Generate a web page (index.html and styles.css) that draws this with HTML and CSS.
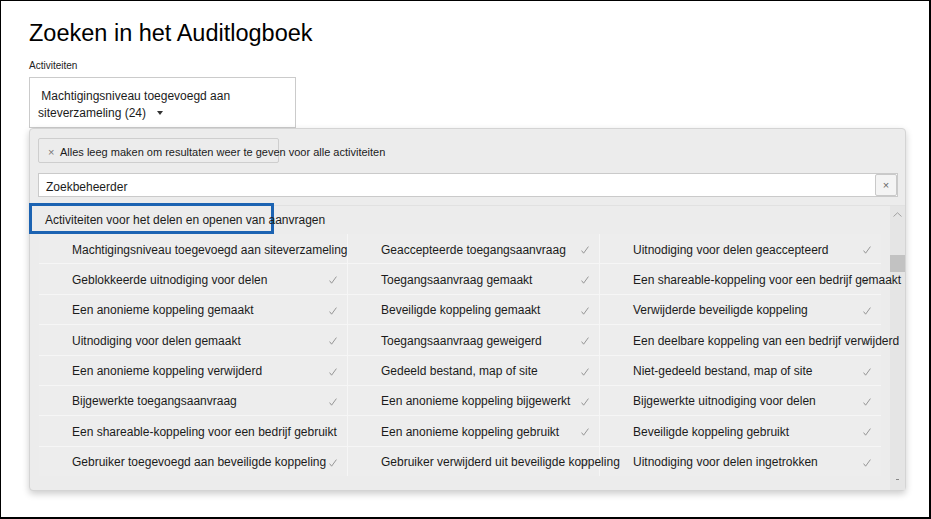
FILE: index.html
```html
<!DOCTYPE html>
<html lang="nl">
<head>
<meta charset="utf-8">
<title>Zoeken in het Auditlogboek</title>
<link rel="stylesheet" href="styles.css">
</head>
<body>
<div class="frame">
  <h1 class="title">Zoeken in het Auditlogboek</h1>
  <div class="label">Activiteiten</div>
  <div class="select">&nbsp;Machtigingsniveau toegevoegd aan siteverzameling (24)<span class="caret"></span></div>
  <div class="panel">
    <div class="chip"><span class="chip-x">×</span><span class="chip-text">Alles leeg maken om resultaten weer te geven voor alle activiteiten</span></div>
    <div class="search"><span class="search-text">Zoekbeheerder</span><span class="search-clear">×</span></div>
    <div class="list">
      <div class="list-body">
        <div class="group-head">Activiteiten voor het delen en openen van aanvragen</div>
        <div class="grid">
          <div class="cell"><span class="txt">Machtigingsniveau toegevoegd aan siteverzameling</span></div>
          <div class="cell"><span class="txt">Geaccepteerde toegangsaanvraag</span><svg class="chk" viewBox="0 0 8 8"><polyline points="0.6,4.6 2.6,7.2 7.4,0.6"/></svg></div>
          <div class="cell"><span class="txt">Uitnodiging voor delen geaccepteerd</span><svg class="chk" viewBox="0 0 8 8"><polyline points="0.6,4.6 2.6,7.2 7.4,0.6"/></svg></div>

          <div class="cell"><span class="txt">Geblokkeerde uitnodiging voor delen</span><svg class="chk" viewBox="0 0 8 8"><polyline points="0.6,4.6 2.6,7.2 7.4,0.6"/></svg></div>
          <div class="cell"><span class="txt">Toegangsaanvraag gemaakt</span><svg class="chk" viewBox="0 0 8 8"><polyline points="0.6,4.6 2.6,7.2 7.4,0.6"/></svg></div>
          <div class="cell"><span class="txt">Een shareable-koppeling voor een bedrijf gemaakt</span><svg class="chk" viewBox="0 0 8 8"><polyline points="0.6,4.6 2.6,7.2 7.4,0.6"/></svg></div>

          <div class="cell"><span class="txt">Een anonieme koppeling gemaakt</span><svg class="chk" viewBox="0 0 8 8"><polyline points="0.6,4.6 2.6,7.2 7.4,0.6"/></svg></div>
          <div class="cell"><span class="txt">Beveiligde koppeling gemaakt</span><svg class="chk" viewBox="0 0 8 8"><polyline points="0.6,4.6 2.6,7.2 7.4,0.6"/></svg></div>
          <div class="cell"><span class="txt">Verwijderde beveiligde koppeling</span><svg class="chk" viewBox="0 0 8 8"><polyline points="0.6,4.6 2.6,7.2 7.4,0.6"/></svg></div>

          <div class="cell"><span class="txt">Uitnodiging voor delen gemaakt</span><svg class="chk" viewBox="0 0 8 8"><polyline points="0.6,4.6 2.6,7.2 7.4,0.6"/></svg></div>
          <div class="cell"><span class="txt">Toegangsaanvraag geweigerd</span><svg class="chk" viewBox="0 0 8 8"><polyline points="0.6,4.6 2.6,7.2 7.4,0.6"/></svg></div>
          <div class="cell"><span class="txt">Een deelbare koppeling van een bedrijf verwijderd</span><svg class="chk" viewBox="0 0 8 8"><polyline points="0.6,4.6 2.6,7.2 7.4,0.6"/></svg></div>

          <div class="cell"><span class="txt">Een anonieme koppeling verwijderd</span><svg class="chk" viewBox="0 0 8 8"><polyline points="0.6,4.6 2.6,7.2 7.4,0.6"/></svg></div>
          <div class="cell"><span class="txt">Gedeeld bestand, map of site</span><svg class="chk" viewBox="0 0 8 8"><polyline points="0.6,4.6 2.6,7.2 7.4,0.6"/></svg></div>
          <div class="cell"><span class="txt">Niet-gedeeld bestand, map of site</span><svg class="chk" viewBox="0 0 8 8"><polyline points="0.6,4.6 2.6,7.2 7.4,0.6"/></svg></div>

          <div class="cell"><span class="txt">Bijgewerkte toegangsaanvraag</span><svg class="chk" viewBox="0 0 8 8"><polyline points="0.6,4.6 2.6,7.2 7.4,0.6"/></svg></div>
          <div class="cell"><span class="txt">Een anonieme koppeling bijgewerkt</span><svg class="chk" viewBox="0 0 8 8"><polyline points="0.6,4.6 2.6,7.2 7.4,0.6"/></svg></div>
          <div class="cell"><span class="txt">Bijgewerkte uitnodiging voor delen</span><svg class="chk" viewBox="0 0 8 8"><polyline points="0.6,4.6 2.6,7.2 7.4,0.6"/></svg></div>

          <div class="cell"><span class="txt">Een shareable-koppeling voor een bedrijf gebruikt</span></div>
          <div class="cell"><span class="txt">Een anonieme koppeling gebruikt</span><svg class="chk" viewBox="0 0 8 8"><polyline points="0.6,4.6 2.6,7.2 7.4,0.6"/></svg></div>
          <div class="cell"><span class="txt">Beveiligde koppeling gebruikt</span><svg class="chk" viewBox="0 0 8 8"><polyline points="0.6,4.6 2.6,7.2 7.4,0.6"/></svg></div>

          <div class="cell"><span class="txt">Gebruiker toegevoegd aan beveiligde koppeling</span><svg class="chk" viewBox="0 0 8 8"><polyline points="0.6,4.6 2.6,7.2 7.4,0.6"/></svg></div>
          <div class="cell"><span class="txt">Gebruiker verwijderd uit beveiligde koppeling</span><svg class="chk" viewBox="0 0 8 8"><polyline points="0.6,4.6 2.6,7.2 7.4,0.6"/></svg></div>
          <div class="cell"><span class="txt">Uitnodiging voor delen ingetrokken</span><svg class="chk" viewBox="0 0 8 8"><polyline points="0.6,4.6 2.6,7.2 7.4,0.6"/></svg></div>
        </div>
      </div>
      <div class="scrollbar">
        <div class="sb-up"><svg viewBox="0 0 9 5"><polyline points="0.5,4.5 4.5,0.8 8.5,4.5"/></svg></div>
        <div class="sb-thumb"></div>
        <div class="sb-fill"></div>
        <div class="sb-down"><span class="sb-dash"></span></div>
      </div>
    </div>
  </div>
</div>
</body>
</html>
```

FILE: styles.css
```css
html, body {
  margin: 0;
  padding: 0;
  background: #ffffff;
}

body {
  font-family: "Liberation Sans", Arial, sans-serif;
  color: #1b1b1b;
}

.frame {
  width: 931px;
  height: 519px;
  box-sizing: border-box;
  border-style: solid;
  border-color: #000;
  border-width: 1px 2px 2px 1px;
  padding: 17.5px 0 0 28px;
  overflow: hidden;
}

.title {
  margin: 0;
  font-size: 23.5px;
  line-height: 28px;
  font-weight: normal;
  color: #000;
}

.label {
  margin-top: 13px;
  font-size: 10px;
  line-height: 12px;
  color: #222;
}

.select {
  margin-top: 5.5px;
  width: 267px;
  height: 51px;
  box-sizing: border-box;
  border: 1px solid #cbcbcb;
  padding: 10px 8px 0 8px;
  font-size: 12px;
  line-height: 16.5px;
  color: #1b1b1b;
  background: #fff;
}

.caret {
  display: inline-block;
  width: 0;
  height: 0;
  margin-left: 11px;
  vertical-align: 2px;
  border-left: 3.5px solid transparent;
  border-right: 3.5px solid transparent;
  border-top: 4px solid #333;
}

.panel {
  width: 877px;
  height: 363px;
  box-sizing: border-box;
  border: 1px solid #d4d4d4;
  border-radius: 4px;
  background: #ececec;
  box-shadow: 0 3px 7px rgba(0, 0, 0, 0.2);
  padding: 9px 8px 0 8px;
  display: flex;
  flex-direction: column;
}

.chip {
  width: 241px;
  height: 25px;
  box-sizing: border-box;
  border: 1px solid #cecece;
  border-radius: 2px;
  background: #ececec;
  display: flex;
  align-items: center;
  padding-left: 9px;
  font-size: 11px;
  white-space: nowrap;
  flex: none;
}

.chip-x {
  width: 12px;
  flex: none;
  color: #777;
  font-size: 11px;
  position: relative;
  top: 1px;
}

.chip-text {
  color: #1b1b1b;
  position: relative;
  top: 1.5px;
}

.search {
  margin-top: 10px;
  width: 860px;
  height: 24px;
  box-sizing: border-box;
  border: 1px solid #cacaca;
  background: #fff;
  display: flex;
  align-items: center;
  padding-left: 7px;
  font-size: 12px;
  flex: none;
}

.search-text {
  flex: 1;
  color: #1b1b1b;
  position: relative;
  top: 1.5px;
}

.search-clear {
  width: 22px;
  height: 22px;
  box-sizing: border-box;
  border: 1px solid #c9c9c9;
  border-radius: 2px;
  background: #f4f4f4;
  color: #666;
  font-size: 11px;
  line-height: 20px;
  text-align: center;
}

.list {
  margin: 8px -8px 0 -8px;
  flex: 1;
  display: flex;
  border-top: 1px solid #e1e1e1;
  min-height: 0;
}

.list-body {
  flex: 1;
  min-width: 0;
}

.group-head {
  margin: -3px 0 0 -1px;
  width: 245px;
  height: 31px;
  box-sizing: border-box;
  border: 3px solid #1c63b2;
  padding: 2px 0 0 13px;
  font-size: 12px;
  line-height: 25px;
  white-space: nowrap;
  color: #1b1b1b;
  position: relative;
}

.grid {
  margin-left: 9px;
  display: grid;
  grid-template-columns: 308px 251px 281px;
  grid-auto-rows: 29.4px;
  gap: 1px;
  background: #f6f6f6;
  width: 842px;
}

.cell {
  position: relative;
  background: #ededed;
  padding-left: 33px;
  font-size: 12px;
  line-height: 29.4px;
  white-space: nowrap;
}

.txt {
  position: relative;
  top: 1.5px;
  z-index: 2;
  color: #1b1b1b;
}

.chk {
  position: absolute;
  right: 10px;
  top: 12px;
  width: 8px;
  height: 8px;
  fill: none;
  stroke: #8c8c8c;
  stroke-width: 0.9;
}

.scrollbar {
  width: 15px;
  flex: none;
  background: #e5e5e5;
  display: flex;
  flex-direction: column;
}

.sb-up {
  height: 16px;
  display: flex;
  align-items: center;
  justify-content: center;
}

.sb-up svg {
  width: 9px;
  height: 5px;
  fill: none;
  stroke: #9a9a9a;
  stroke-width: 0.9;
}

.sb-thumb {
  margin-top: 33px;
  height: 17px;
  background: #c2c2c2;
}

.sb-fill {
  flex: 1;
}

.sb-down {
  height: 12px;
  display: flex;
  justify-content: center;
}

.sb-dash {
  width: 3px;
  height: 1px;
  margin-top: 1px;
  background: #888;
}
```
